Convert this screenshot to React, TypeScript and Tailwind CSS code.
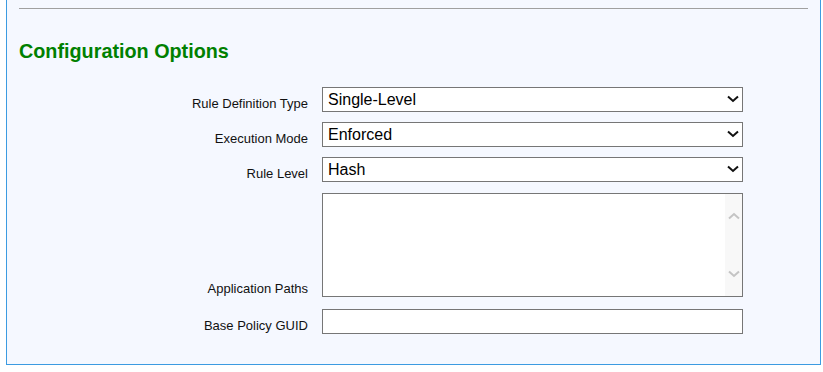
import React from 'react';

function Chevron({ className }: { className?: string }) {
  return (
    <svg width="12" height="8" viewBox="0 0 12 8" className={className}>
      <path d="M1 1.5 L6 6 L11 1.5" fill="none" stroke="currentColor" strokeWidth="2" />
    </svg>
  );
}

function SelectBox({ value }: { value: string }) {
  return (
    <div className="relative h-[25px] w-[421px]">
      <select
        defaultValue={value}
        className="h-full w-full appearance-none border border-[#767676] bg-white pl-[5px] text-[16px] leading-[23px] text-black outline-none"
      >
        <option>{value}</option>
      </select>
      <Chevron className="pointer-events-none absolute right-[4px] top-[8px] text-[#111]" />
    </div>
  );
}

function Row({ label, children, className }: { label: string; children: React.ReactNode; className?: string }) {
  return (
    <div className={`flex gap-[14px] ${className ?? ''}`}>
      <div className="flex w-[289px] items-end justify-end pb-[1px] text-[13px] leading-[15px] text-[#111]">
        {label}
      </div>
      {children}
    </div>
  );
}

export default function App() {
  return (
    <div className="h-[372px] w-[823px] bg-white" style={{ fontFamily: '"Liberation Sans", Arial, sans-serif' }}>
      <div className="ml-[6px] h-[365px] w-[815px] border-x border-b border-[#3c9be1] bg-[#f5f8ff] px-[12px] pt-[8px]">
        <div className="h-px bg-[#a0a0a0]" />
        <h2 className="mt-[31px] text-[19.8px] font-bold leading-[23px] text-[#008000]">Configuration Options</h2>

        <div className="mt-[24px] flex flex-col">
          <Row label="Rule Definition Type">
            <SelectBox value="Single-Level" />
          </Row>
          <Row label="Execution Mode" className="mt-[10px]">
            <SelectBox value="Enforced" />
          </Row>
          <Row label="Rule Level" className="mt-[10px]">
            <SelectBox value="Hash" />
          </Row>
          <Row label="Application Paths" className="mt-[11px]">
            <div className="flex h-[104px] w-[421px] border border-[#767676] bg-white">
              <textarea className="flex-1 resize-none bg-white p-[2px] text-[13px] outline-none" />
              <div className="flex w-[17px] flex-col items-center justify-between bg-[#f8f8f8] pb-[18px] pt-[18px] text-[#c4c4c4]">
                <Chevron className="rotate-180" />
                <Chevron />
              </div>
            </div>
          </Row>
          <Row label="Base Policy GUID" className="mt-[12px]">
            <input
              type="text"
              className="h-[25px] w-[421px] border border-[#767676] bg-white px-[5px] text-[16px] outline-none"
            />
          </Row>
        </div>
      </div>
    </div>
  );
}
